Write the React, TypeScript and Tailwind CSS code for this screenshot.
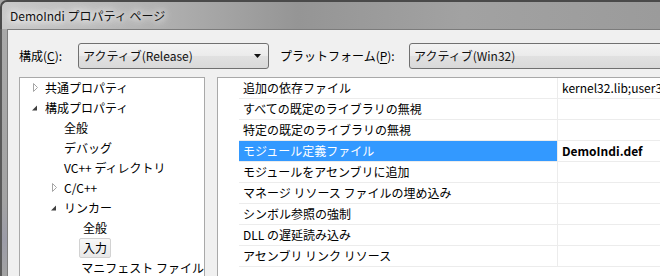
import React from 'react';

type TreeItem = { label: string; level: number; arrow?: 'open' | 'closed'; selected?: boolean };

const treeItems: TreeItem[] = [
  { label: '共通プロパティ', level: 0, arrow: 'closed' },
  { label: '構成プロパティ', level: 0, arrow: 'open' },
  { label: '全般', level: 1 },
  { label: 'デバッグ', level: 1 },
  { label: 'VC++ ディレクトリ', level: 1 },
  { label: 'C/C++', level: 1, arrow: 'closed' },
  { label: 'リンカー', level: 1, arrow: 'open' },
  { label: '全般', level: 2 },
  { label: '入力', level: 2, selected: true },
  { label: 'マニフェスト ファイル', level: 2 },
];

const gridRows: { name: string; value?: string; selected?: boolean }[] = [
  { name: '追加の依存ファイル', value: 'kernel32.lib;user32.lib;gdi32.lib;winspool.lib' },
  { name: 'すべての既定のライブラリの無視' },
  { name: '特定の既定のライブラリの無視' },
  { name: 'モジュール定義ファイル', value: 'DemoIndi.def', selected: true },
  { name: 'モジュールをアセンブリに追加' },
  { name: 'マネージ リソース ファイルの埋め込み' },
  { name: 'シンボル参照の強制' },
  { name: 'DLL の遅延読み込み' },
  { name: 'アセンブリ リンク リソース' },
];

const indent = ['pl-[11px]', 'pl-[30px]', 'pl-[49px]'];

function Arrow({ kind }: { kind?: 'open' | 'closed' }) {
  if (kind === 'open') {
    return (
      <svg width="14" height="20" viewBox="0 0 14 20">
        <polygon points="6,12.5 6,7.5 1,12.5" fill="#3f3f3f" transform="translate(0,0)" />
      </svg>
    );
  }
  if (kind === 'closed') {
    return (
      <svg width="14" height="20" viewBox="0 0 14 20">
        <polygon points="2.5,5.5 2.5,13.5 6.5,9.5" fill="#fff" stroke="#a6a6a6" strokeWidth="1" />
      </svg>
    );
  }
  return <span className="inline-block w-[14px]" />;
}

function Combo({ text, width }: { text: string; width: string }) {
  return (
    <div
      className={`${width} h-[26px] shrink-0 flex items-center justify-between rounded-[3px] border border-[#707070] bg-[linear-gradient(#f3f3f3,#ebebeb_50%,#e1e1e1_50%,#d9d9d9)] pl-[4px] pr-[6px]`}
    >
      <span className="leading-[20px] text-[#111]">{text}</span>
      <svg width="8" height="5" viewBox="0 0 8 5">
        <polygon points="0,0 7,0 3.5,4" fill="#111" />
      </svg>
    </div>
  );
}

export default function App() {
  return (
    <div className="w-[660px] h-[276px] overflow-hidden bg-[#a6a6a6] font-['Noto_Sans_CJK_JP',sans-serif] text-[12px] text-black">
      {/* title bar */}
      <div className="h-[29px] flex items-center pl-[8px] rounded-tl-[7px] border-t-2 border-l-2 border-[#4a4a4a] bg-[linear-gradient(90deg,#c9c9c9_0%,#b3b3b3_22%,#959595_45%,#a2a2a2_70%,#9b9b9b_100%)]">
        <span className="leading-[20px] text-[#111] [text-shadow:0_0_6px_#fff,0_0_10px_#fff,0_0_14px_#fff]">
          DemoIndi プロパティ ページ
        </span>
      </div>

      <div className="flex h-[247px]">
        {/* left frame */}
        <div className="w-[7px] shrink-0 border-l-2 border-[#5a5a5a] bg-[linear-gradient(#a9a9a9,#a3a3a3_70%,#9c9ca8_85%,#a3a3a3)]" />

        {/* client area */}
        <div className="flex-1 min-w-0 flex flex-col bg-[#f0f0f0] border-l border-t border-[#7c7c7c] pl-[11px] pt-[13px]">
          <div className="flex items-center">
            <span className="w-[59px] shrink-0 leading-[20px]">
              構成(<span className="underline underline-offset-2">C</span>):
            </span>
            <Combo text="アクティブ(Release)" width="w-[191px]" />
            <span className="ml-[11px] w-[129px] shrink-0 leading-[20px]">
              プラットフォーム(<span className="underline underline-offset-2">P</span>):
            </span>
            <Combo text="アクティブ(Win32)" width="w-[280px]" />
          </div>

          <div className="flex mt-[8px] flex-1 min-h-0">
            {/* tree */}
            <div className="w-[186px] shrink-0 ml-[0px] border-l border-t border-r border-[#a9a9a9] bg-white overflow-hidden">
              {treeItems.map((it, i) => (
                <div key={i} className={`h-[20px] flex items-center whitespace-nowrap ${indent[it.level]}`}>
                  <Arrow kind={it.arrow} />
                  {it.selected ? (
                    <span className="h-[20px] -ml-[4px] px-[3px] leading-[18px] rounded-[2px] border border-[#d2d2d2] bg-[linear-gradient(#f8f8f8,#e8e8e8)]">
                      {it.label}
                    </span>
                  ) : (
                    <span className="leading-[20px]">{it.label}</span>
                  )}
                </div>
              ))}
            </div>

            {/* property grid */}
            <div className="ml-[12px] flex-1 min-w-0 border-l border-t border-[#a9a9a9] bg-white overflow-hidden">
              {gridRows.map((r, i) => (
                <div key={i} className="flex h-[21px]">
                  <div className="w-[21px] shrink-0" />
                  <div
                    className={`w-[318px] shrink-0 h-[21px] border-b border-[#ececec] pl-[4px] leading-[20px] whitespace-nowrap overflow-hidden ${
                      r.selected ? 'bg-[#3399ff] text-white' : ''
                    }`}
                  >
                    {r.name}
                  </div>
                  <div
                    className={`flex-1 h-[21px] border-b border-l border-[#ececec] pl-[4px] leading-[20px] whitespace-nowrap overflow-hidden ${
                      r.selected ? 'font-bold' : ''
                    }`}
                  >
                    {r.value}
                  </div>
                </div>
              ))}
            </div>
          </div>
        </div>
      </div>
    </div>
  );
}
